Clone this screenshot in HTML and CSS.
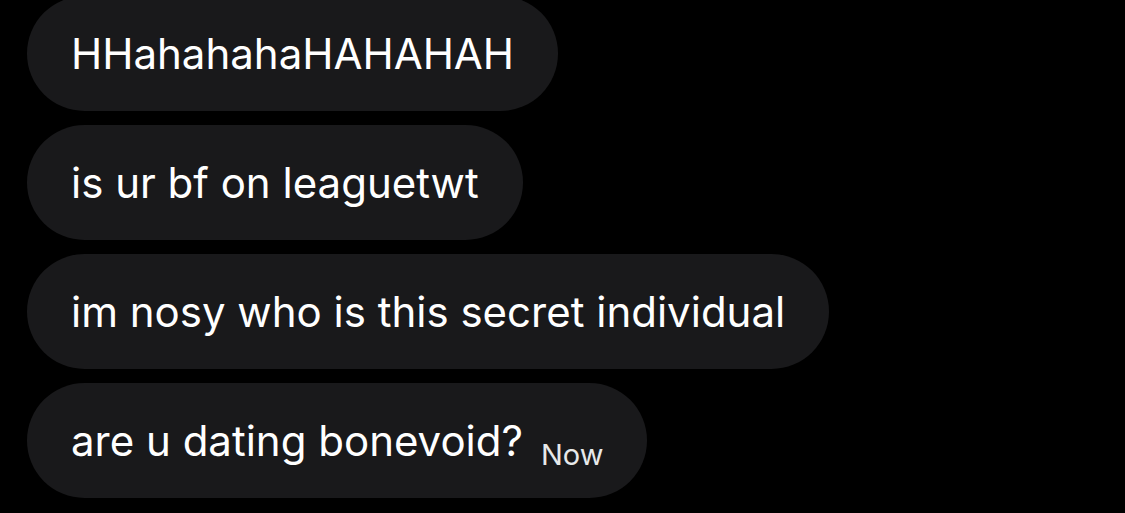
FILE: index.html
```html
<!DOCTYPE html>
<html lang="en">

<head>
    <meta charset="UTF-8">
    <meta name="viewport" content="width=device-width, initial-scale=1.0">
    <title>Messages</title>
    <link rel="stylesheet" href="styles.css">
</head>

<body>
    <div class="chat">
        <div class="bubble">HHahahahaHAHAHAH</div>
        <div class="bubble">is ur bf on leaguetwt</div>
        <div class="bubble">im nosy who is this secret individual</div>
        <div class="bubble">are u dating bonevoid?<span class="time">Now</span></div>
    </div>
</body>

</html>
```

FILE: styles.css
```css
* {
    box-sizing: border-box;
}

body {
    margin: 0;
    background-color: #000;
    font-family: "Inter", "Liberation Sans", sans-serif;
    overflow: hidden;
}

.chat {
    display: flex;
    flex-direction: column;
    align-items: flex-start;
    gap: 14px;
    padding-left: 27px;
    margin-top: -4px;
}

.bubble {
    background-color: #19191b;
    color: #fff;
    font-size: 42px;
    line-height: 51px;
    height: 115px;
    padding: 32px 44px;
    border-radius: 58px;
    white-space: nowrap;
}

.time {
    font-size: 29px;
    margin-left: 18px;
    color: #e7e9ea;
    vertical-align: -9px;
}
```
